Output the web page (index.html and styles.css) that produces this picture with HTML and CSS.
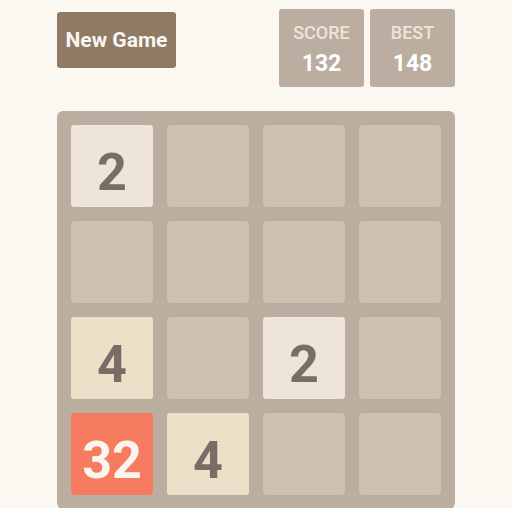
FILE: index.html
```html
<!DOCTYPE html>
<html>
<head>
<meta charset="utf-8">
<link rel="stylesheet" href="styles.css">
</head>
<body>
<div class="container">
  <div class="header">
    <button class="new-game">New Game</button>
    <div class="scores">
      <div class="score-box"><div class="label">SCORE</div><div class="value">132</div></div>
      <div class="score-box"><div class="label">BEST</div><div class="value">148</div></div>
    </div>
  </div>
  <div class="board">
    <div class="cell t2">2</div><div class="cell"></div><div class="cell"></div><div class="cell"></div>
    <div class="cell"></div><div class="cell"></div><div class="cell"></div><div class="cell"></div>
    <div class="cell t4">4</div><div class="cell"></div><div class="cell t2">2</div><div class="cell"></div>
    <div class="cell t32">32</div><div class="cell t4">4</div><div class="cell"></div><div class="cell"></div>
  </div>
</div>
</body>
</html>
```
FILE: styles.css
```css
html, body {
  margin: 0;
  padding: 0;
  background: #fbf8f1;
  font-family: Roboto, "Liberation Sans", Arial, sans-serif;
  overflow: hidden;
}
.container {
  width: 398px;
  margin: 0 auto;
  padding-top: 9px;
}
.header {
  display: flex;
  justify-content: space-between;
  align-items: flex-start;
}
.new-game {
  margin-top: 3px;
  width: 119px;
  height: 56px;
  border: none;
  border-radius: 3px;
  background: #8f7a66;
  color: #f9f6f2;
  font-family: Roboto, "Liberation Sans", Arial, sans-serif;
  font-weight: 700;
  font-size: 21px;
  padding: 0;
}
.scores {
  display: flex;
  gap: 6px;
}
.score-box {
  width: 85px;
  height: 78px;
  background: #bbada0;
  border-radius: 3px;
  display: flex;
  flex-direction: column;
  align-items: center;
  box-sizing: border-box;
  padding-top: 15px;
}
.label {
  color: #eee4da;
  font-size: 18px;
  font-weight: 500;
  line-height: 18px;
}
.value {
  color: #ffffff;
  font-size: 23px;
  font-weight: 700;
  line-height: 24px;
  margin-top: 10px;
}
.board {
  margin-top: 24px;
  background: #bbada0;
  border-radius: 6px;
  padding: 14px;
  display: grid;
  grid-template-columns: repeat(4, 82px);
  grid-auto-rows: 82px;
  gap: 14px;
}
.cell {
  background: #cdc1b4;
  border-radius: 3px;
  display: flex;
  align-items: center;
  justify-content: center;
  box-sizing: border-box;
  padding-top: 12px;
  font-size: 52px;
  font-weight: 700;
  color: #776e65;
}
.t2 { background: #eee4da; }
.t4 { background: #ede0c8; }
.t32 { background: #f67c5f; color: #f9f6f2; }
```
